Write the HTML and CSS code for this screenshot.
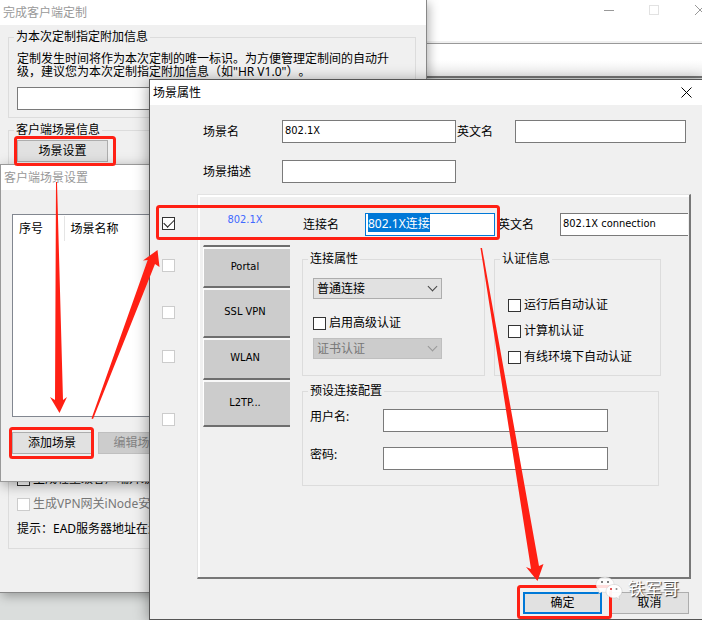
FILE: index.html
```html
<!DOCTYPE html>
<html lang="zh-CN">
<head>
    <meta charset="UTF-8">
    <meta name="viewport" content="width=device-width, initial-scale=1.0">
    <title>场景属性</title>
    <link rel="stylesheet" href="styles.css">
</head>
<body>
    <div class="desktop">
        <!-- Main application window -->
        <div class="window app-window">
            <div class="app-title">
                <svg class="app-controls" width="110" height="20" viewBox="0 0 110 20" fill="none">
                    <path d="M12 10.5h10" stroke="#999"/>
                    <rect x="57.500" y="5.500" width="9" height="9" stroke="#e2e2e2"/>
                    <path d="M103 5l10 10M103 15l10-10" stroke="#999"/>
                </svg>
            </div>
            <div class="app-content"></div>
        </div>

        <!-- Client customization -->
        <div class="window custom-window">
            <div class="titlebar inactive">完成客户端定制</div>
            <div class="custom-body">
                <fieldset class="group group-info">
                    <legend>为本次定制指定附加信息</legend>
                    <label class="info-text" for="extra">定制发生时间将作为本次定制的唯一标识。为方便管理定制间的自动升级，建议您为本次定制指定附加信息（如"HR V1.0"）。</label>
                    <input class="text" id="extra" type="text">
                </fieldset>
                <fieldset class="group group-scene">
                    <legend>客户端场景信息</legend>
                    <button class="btn btn-setup" type="button">场景设置</button>
                    <div class="options">
                        <label class="check"><input type="checkbox">生成轻量级客户端升级包</label>
                        <label class="check off"><input type="checkbox" disabled>生成VPN网关iNode安装包</label>
                        <p class="hint">提示：EAD服务器地址在连接中设置</p>
                    </div>
                </fieldset>
            </div>
        </div>

        <!-- Scene list -->
        <div class="window scene-window">
            <div class="titlebar inactive">客户端场景设置</div>
            <div class="scene-body">
                <div class="scene-list">
                    <table>
                        <thead>
                            <tr><th class="num">序号</th><th>场景名称</th></tr>
                        </thead>
                    </table>
                </div>
                <div class="scene-buttons">
                    <button class="btn btn-add" type="button">添加场景</button>
                    <button class="btn btn-edit" type="button" disabled>编辑场景</button>
                </div>
            </div>
        </div>

        <!-- Scene properties -->
        <div class="window dialog">
            <div class="titlebar">
                场景属性
                <button class="close" type="button" aria-label="关闭">
                    <svg width="11" height="11" viewBox="0 0 11 11"><path d="M.5.5l10 10M.5 10.500l10-10" stroke="#000"/></svg>
                </button>
            </div>
            <div class="dialog-form">
                <label for="scene-name">场景名</label>
                <input class="text latin" id="scene-name" type="text" value="802.1X">
                <label class="second" for="scene-en">英文名</label>
                <input class="text" id="scene-en" type="text">
                <label for="scene-desc">场景描述</label>
                <input class="text" id="scene-desc" type="text">
            </div>
            <div class="connections">
                <div class="enable">
                    <input type="checkbox" aria-label="802.1X" checked>
                    <input type="checkbox" aria-label="Portal" disabled>
                    <input type="checkbox" aria-label="SSL VPN" disabled>
                    <input type="checkbox" aria-label="WLAN" disabled>
                    <input type="checkbox" aria-label="L2TP" disabled>
                </div>
                <div class="panel">
                    <div class="tabs">
                        <button class="tab latin active" type="button">802.1X</button>
                        <button class="tab latin" type="button">Portal</button>
                        <button class="tab latin" type="button">SSL VPN</button>
                        <button class="tab latin" type="button">WLAN</button>
                        <button class="tab latin" type="button">L2TP...</button>
                    </div>
                    <div class="settings">
                        <div class="name-row">
                            <label for="conn-name">连接名</label>
                            <input class="text focus" id="conn-name" type="text" value="802.1X连接">
                            <label class="second" for="conn-en">英文名</label>
                            <input class="text latin cut" id="conn-en" type="text" value="802.1X connection">
                        </div>
                        <div class="groups">
                            <fieldset class="group group-props">
                                <legend>连接属性</legend>
                                <span class="combo">
                                    <select aria-label="连接类型"><option>普通连接</option></select>
                                </span>
                                <label class="check"><input type="checkbox">启用高级认证</label>
                                <span class="combo off">
                                    <select aria-label="认证方式" disabled><option>证书认证</option></select>
                                </span>
                            </fieldset>
                            <fieldset class="group group-auth">
                                <legend>认证信息</legend>
                                <label class="check"><input type="checkbox">运行后自动认证</label>
                                <label class="check"><input type="checkbox">计算机认证</label>
                                <label class="check"><input type="checkbox">有线环境下自动认证</label>
                            </fieldset>
                        </div>
                        <fieldset class="group group-preset">
                            <legend>预设连接配置</legend>
                            <div class="preset">
                                <label for="user">用户名:</label>
                                <input class="text" id="user" type="text">
                                <label for="pass">密码:</label>
                                <input class="text" id="pass" type="password">
                            </div>
                        </fieldset>
                    </div>
                </div>
            </div>
            <div class="dialog-buttons">
                <button class="btn btn-ok" type="button">确定</button>
                <button class="btn btn-cancel" type="button">取消</button>
            </div>
        </div>

        <!-- Step marks -->
        <svg class="marks" width="702" height="620" viewBox="0 0 702 620">
            <g fill="none" stroke="#ff2014" stroke-width="3">
                <rect x="15.500" y="137.500" width="99" height="27" rx="2"/>
                <rect x="10.500" y="428.500" width="82" height="29" rx="2"/>
                <rect x="157.500" y="206.500" width="341" height="32" rx="2"/>
                <rect x="518.500" y="586.500" width="92" height="31" rx="2"/>
            </g>
            <g fill="#ff2014">
                <path d="M56 182h1L63 400l4-3-7.500 16L50 397l5 3z"/>
                <path d="M91.500 418.500L147.700 260l-4.700.5L157.500 250l2 17-4.500-3L93 419z"/>
                <path d="M480.500 248h1.500L539 566l4.500-2-6 17-11.500-14 5 2z"/>
            </g>
        </svg>

        <div class="watermark">
            <svg width="28" height="26" viewBox="0 0 28 26">
                <path d="M10 1C4.500 1 1 4.500 1 8.500c0 2.500 1.200 4.500 3.200 6L3.500 18l3.500-2c1 .3 2 .4 3 .4 5 0 9-3.500 9-7.900S15 1 10 1z" fill="#fff" fill-opacity=".85" stroke="#999" stroke-opacity=".4" stroke-width=".5"/>
                <path d="M19 8.500c-4.500 0-8 3-8 6.800s3.500 6.700 8 6.700c1 0 1.800-.1 2.700-.4l2.800 1.900-.6-3.100c1.900-1.200 3.100-3 3.100-5.100 0-3.800-3.500-6.800-8-6.800z" fill="#fff" fill-opacity=".95" stroke="#999" stroke-opacity=".5" stroke-width=".5"/>
                <circle cx="7" cy="6" r="1" fill="#555"/><circle cx="13" cy="6" r="1" fill="#555"/>
                <circle cx="16" cy="13" r="1" fill="#d22"/><circle cx="21.500" cy="13" r="1" fill="#888"/>
            </svg>
            <span>铁军哥</span>
        </div>
    </div>

    <script>
        // keep the connection name selected, ready for typing
        document.getElementById('conn-name').focus();
        document.getElementById('conn-name').select();
    </script>
</body>
</html>
```
FILE: styles.css
```css
* {
    box-sizing: border-box;
}

body {
    margin: 0;
    font-family: "Noto Sans", "Noto Sans CJK SC", sans-serif;
    font-size: 12px;
    line-height: 16px;
    text-spacing-trim: space-all;
    color: #000;
}

button, input, select {
    font: inherit;
    color: inherit;
}

.latin {
    font-family: "DejaVu Sans Condensed", "Noto Sans", sans-serif;
    font-size: 11px;
}

.desktop {
    position: relative;
    min-height: 100vh;
    overflow: hidden;
    background: #dadddc;
}

/* windows */
.window {
    position: absolute;
    background: #f0f0f0;
}

.titlebar {
    display: flex;
    justify-content: space-between;
    align-items: center;
    height: 25px;
    padding: 0 3px;
    background: #fff;
}

.titlebar.inactive {
    color: #999;
}

.app-window {
    top: 0;
    right: 0;
    left: 0;
}

.app-title {
    display: flex;
    justify-content: flex-end;
    height: 43px;
    background: #fff;
    border-bottom: 2px solid #f0f0f0;
}

.app-content {
    height: 35px;
    background: linear-gradient(#fff 50%, #eee);
    border-top: 1px solid #999;
    border-bottom: 2px solid #777;
}

.custom-window {
    top: 0;
    left: 0;
    width: 427px;
    border-right: 1px solid #888;
    border-bottom: 1px solid #888;
    box-shadow: 2px 3px 10px rgba(0,0,0,0.3);
}

.custom-body {
    padding: 4px 10px 43px 8px;
}

.scene-window {
    top: 164px;
    left: 0;
    width: 340px;
    border: 1px solid #999;
    box-shadow: 2px 3px 12px rgba(0,0,0,0.35);
}

.dialog {
    top: 79px;
    left: 149px;
    right: 0;
    border: 1px solid #555;
    border-right: none;
    box-shadow: 0 2px 14px rgba(0,0,0,0.4);
}

/* controls */
.text {
    width: 100%;
    height: 23px;
    padding: 0 2px 3px;
    background: #fff;
    border: 1px solid #7a7a7a;
    border-radius: 0;
    outline: none;
}

.text.focus {
    border-color: #0078d7;
}

.text.cut {
    border-right: none;
}

.text::selection {
    background: #0078d7;
    color: #fff;
}

.btn {
    height: 22px;
    padding: 0;
    background: #e1e1e1;
    border: 1px solid #adadad;
}

.btn:disabled {
    background: #ccc;
    border-color: #bfbfbf;
    color: #838383;
}

.btn-ok {
    border: 2px solid #0078d7;
}

input[type="checkbox"] {
    appearance: none;
    position: relative;
    flex: none;
    width: 13px;
    height: 13px;
    margin: 0;
    background: #fff;
    border: 1px solid #333;
}

input[type="checkbox"]:disabled {
    border-color: #ccc;
}

input[type="checkbox"]:checked::after {
    content: "";
    position: absolute;
    top: 1px;
    left: 1px;
    width: 9px;
    height: 5px;
    border-left: 1px solid #222;
    border-bottom: 1px solid #222;
    transform: rotate(-45deg);
}

.check {
    display: flex;
    align-items: center;
    gap: 3px;
    white-space: nowrap;
}

.check.off {
    color: #777;
}

.combo {
    display: block;
    position: relative;
    width: 129px;
}

.combo select {
    appearance: none;
    display: block;
    width: 100%;
    height: 21px;
    padding: 0 3px;
    background: #e1e1e1;
    border: 1px solid #adadad;
    border-radius: 0;
}

.combo::after {
    content: "";
    position: absolute;
    top: 5px;
    right: 6px;
    width: 6px;
    height: 6px;
    border-right: 1px solid #444;
    border-bottom: 1px solid #444;
    transform: rotate(45deg);
}

.combo.off select {
    background: #ccc;
    border-color: #bfbfbf;
    color: #777;
    opacity: 1;
}

.combo.off::after {
    border-color: #999;
}

.group {
    min-width: 0;
    margin: 0;
    padding: 0 5px;
    border: 1px solid #dcdcdc;
}

.group legend {
    padding: 0 2px;
}

/* customization window */
.group-info {
    height: 89px;
    padding-top: 7px;
}

.info-text {
    display: block;
    margin: 0 16px 9px 3px;
    line-height: 13px;
}

.group-info .text {
    margin-left: 3px;
}

.group-scene {
    margin-top: 4px;
    padding-top: 2px;
    padding-bottom: 11px;
}

.btn-setup {
    display: block;
    width: 91px;
    margin-left: 3px;
}

.options {
    display: flex;
    flex-direction: column;
    gap: 9px;
    margin: 309px 0 0 3px;
}

.hint {
    margin: 0;
    white-space: nowrap;
}

/* scene list window */
.scene-body {
    padding: 24px 11px 27px;
}

.scene-list {
    height: 203px;
    padding-top: 1px;
    background: #fff;
    border: 1px solid #828790;
}

.scene-list table {
    border-collapse: collapse;
}

.scene-list th {
    height: 25px;
    padding: 0 6px;
    font-weight: normal;
    text-align: left;
}

.scene-list .num {
    width: 51px;
    border-right: 1px solid #e5e5e5;
}

.scene-buttons {
    display: flex;
    gap: 6px;
    margin-top: 15px;
}

.btn-add {
    width: 80px;
}

.btn-edit {
    width: 79px;
}

/* scene properties */
.close {
    display: flex;
    margin-right: 7px;
    padding: 0;
    background: none;
    border: none;
}

.dialog-form {
    display: grid;
    grid-template-columns: 79px 174px 59px 1fr;
    row-gap: 17px;
    align-items: center;
    padding: 15px 16px 0 53px;
}

.second {
    padding-left: 1px;
}

.connections {
    display: flex;
    margin: 11px 11px 0 0;
}

.enable {
    display: grid;
    grid-template-rows: 42px 47px 44px 63px 13px;
    align-content: start;
    width: 47px;
    padding: 23px 0 0 12px;
}

.panel {
    display: flex;
    flex: 1;
    min-width: 0;
    min-height: 385px;
    border: 1px solid #e3e3e3;
    border-right: 2px solid #777;
    border-bottom: 2px solid #777;
    box-shadow: inset 2px 2px 0 #fff;
}

.tabs {
    display: grid;
    grid-template-rows: 52px 41px 50px 42px 47px;
    align-content: start;
    width: 92px;
    padding-left: 5px;
}

.tab {
    padding: 0 4px 2px 0;
    background: #ccc;
    border: none;
    border-left: 1px solid #fff;
    border-top: 2px solid #f8f8f8;
    border-bottom: 2px solid #6e6e6e;
}

.tab.active {
    background: none;
    border-left-color: transparent;
    border-top-color: transparent;
    color: #4169ff;
}

.settings {
    flex: 1;
    min-width: 0;
    padding: 18px 0 0 12px;
}

.name-row {
    display: grid;
    grid-template-columns: 63px 130px 65px 1fr;
    align-items: center;
    padding-right: 1px;
}

.name-row label {
    padding: 1px 0 0 1px;
}

.name-row .second {
    padding-left: 3px;
}

.groups {
    display: flex;
    gap: 9px;
    margin-top: 15px;
}

.group-props {
    width: 183px;
    height: 125px;
    padding-top: 11px;
}

.group-props .combo,
.group-props .check {
    margin-left: 5px;
}

.group-props .check {
    margin-top: 16px;
    margin-bottom: 7px;
}

.group-auth {
    width: 167px;
    padding-top: 30px;
}

.group-auth .check {
    margin-left: 8px;
}

.group-auth .check + .check {
    margin-top: 10px;
}

.group-preset {
    width: 357px;
    margin-top: 7px;
    padding-top: 10px;
    padding-bottom: 15px;
}

.preset {
    display: grid;
    grid-template-columns: 73px 225px;
    row-gap: 15px;
    margin-left: 2px;
}

.dialog-buttons {
    display: flex;
    justify-content: flex-end;
    gap: 8px;
    padding: 13px 13px 5px;
}

.btn-ok,
.btn-cancel {
    width: 79px;
}

/* overlays */
.marks {
    position: absolute;
    top: 0;
    left: 0;
    pointer-events: none;
}

.watermark {
    position: absolute;
    right: 23px;
    bottom: 18px;
    display: flex;
    align-items: center;
    gap: 5px;
    font-size: 17px;
    color: #fff;
    text-shadow: 1px 1px 1px #333;
    pointer-events: none;
}
```
